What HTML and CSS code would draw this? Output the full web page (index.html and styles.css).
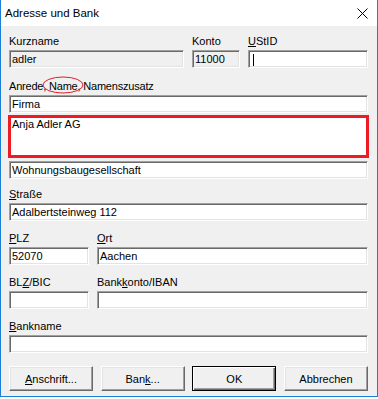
FILE: index.html
```html
<!DOCTYPE html>
<html lang="de">
<head>
  <meta charset="UTF-8">
  <title>Adresse und Bank</title>
  <link rel="stylesheet" href="styles.css">
</head>
<body>

  <div class="window">
    <div class="titlebar">
      <span class="title">Adresse und Bank</span>
      <svg class="close" width="11" height="11" viewBox="0 0 11 11">
        <path d="M0.5 0.5 L10.5 10.5 M10.5 0.5 L0.5 10.5" stroke="#000" stroke-width="1" fill="none"/>
      </svg>
    </div>

    <div class="dialog">
      <div class="row row-top">
        <div class="group">
          <div class="label">Kurzname</div>
          <div class="input readonly">adler</div>
        </div>
        <div class="group">
          <div class="label">Konto</div>
          <div class="input readonly">11000</div>
        </div>
        <div class="group">
          <div class="label"><u>U</u>StID</div>
          <div class="input"><span class="caret"></span></div>
        </div>
      </div>

      <div class="group group-name">
        <div class="label label-mark">
          Anrede, Name, Namenszusatz
          <svg class="mark" width="42" height="18" viewBox="0 0 42 18">
            <ellipse cx="21" cy="9" rx="20" ry="8" stroke="#e0202a" stroke-width="1" fill="none"/>
          </svg>
        </div>
        <div class="input">Firma</div>
        <div class="name-box">Anja Adler AG</div>
        <div class="input input-extra">Wohnungsbaugesellschaft</div>
      </div>

      <div class="group group-street">
        <div class="label"><u>S</u>traße</div>
        <div class="input">Adalbertsteinweg 112</div>
      </div>

      <div class="row row-split">
        <div class="group">
          <div class="label"><u>P</u>LZ</div>
          <div class="input">52070</div>
        </div>
        <div class="group">
          <div class="label"><u>O</u>rt</div>
          <div class="input">Aachen</div>
        </div>
      </div>

      <div class="row row-split">
        <div class="group">
          <div class="label">BL<u>Z</u>/BIC</div>
          <div class="input"></div>
        </div>
        <div class="group">
          <div class="label">Bank<u>k</u>onto/IBAN</div>
          <div class="input"></div>
        </div>
      </div>

      <div class="group group-bank">
        <div class="label"><u>B</u>ankname</div>
        <div class="input"></div>
      </div>

      <div class="buttons">
        <button class="button"><u>A</u>nschrift...</button>
        <button class="button">Ban<u>k</u>...</button>
        <button class="button default">OK</button>
        <button class="button">Abbrechen</button>
      </div>
    </div>
  </div>

</body>
</html>
```

FILE: styles.css
```css
* { margin: 0; padding: 0; box-sizing: border-box; }
body {
  background-color: #ffffff;
  font-family: "Liberation Sans", Arial, sans-serif;
  font-size: 11px;
  color: #000000;
}
.window {
  width: 378px;
  height: 397px;
  border-left: 1px solid #1c7fd6;
  border-right: 1px solid #1c7fd6;
  border-bottom: 1px solid #1c7fd6;
  background-color: #f0f0f0;
}
.titlebar {
  height: 26px;
  background-color: #ffffff;
  display: flex;
  align-items: center;
  justify-content: space-between;
  padding: 0 9px 0 4px;
}
.title {
  font-size: 11.5px;
}
.dialog {
  padding: 9px 9px 0 8px;
}
.label {
  height: 13px;
  line-height: 13px;
  margin-bottom: 2px;
  white-space: nowrap;
}
.label-mark {
  position: relative;
  letter-spacing: -0.2px;
}
.mark {
  position: absolute;
  left: 33px;
  top: -4px;
}
.input {
  height: 18px;
  line-height: 16px;
  padding: 0 2px;
  background-color: #ffffff;
  border: 1px solid;
  border-color: #a0a0a0 #ffffff #ffffff #a0a0a0;
  box-shadow: inset 1px 1px #696969, inset -1px -1px #e3e3e3;
  white-space: nowrap;
  overflow: hidden;
}
.readonly {
  background-color: #f0f0f0;
}
.caret {
  display: inline-block;
  width: 1px;
  height: 12px;
  margin-left: 2px;
  vertical-align: middle;
  background-color: #000000;
}
.row {
  display: grid;
}
.row-top {
  grid-template-columns: 175px 48px 1fr;
  column-gap: 8px;
}
.row-split {
  grid-template-columns: 80px 1fr;
  column-gap: 8px;
  margin-top: 11px;
}
.group-name {
  margin-top: 12px;
}
.name-box {
  height: 43px;
  margin: 2px -1px 0 -1px;
  padding: 0 0 0 1px;
  line-height: 13px;
  background-color: #ffffff;
  border: 3px solid #ed1c24;
}
.input-extra {
  margin-top: 3px;
}
.group-street {
  margin-top: 9px;
}
.group-bank {
  margin-top: 11px;
}
.buttons {
  display: flex;
  justify-content: space-between;
  margin-top: 13px;
}
.button {
  width: 84px;
  height: 25px;
  font-family: "Liberation Sans", Arial, sans-serif;
  font-size: 11px;
  color: #000000;
  background-color: #f0f0f0;
  border: 1px solid;
  border-color: #ffffff #696969 #696969 #ffffff;
  box-shadow: inset -1px -1px #a0a0a0, inset 1px 1px #e3e3e3;
}
.default {
  border: 1px solid #000000;
  box-shadow: inset 1px 1px #ffffff, inset -1px -1px #696969, inset -2px -2px #a0a0a0;
}
```
